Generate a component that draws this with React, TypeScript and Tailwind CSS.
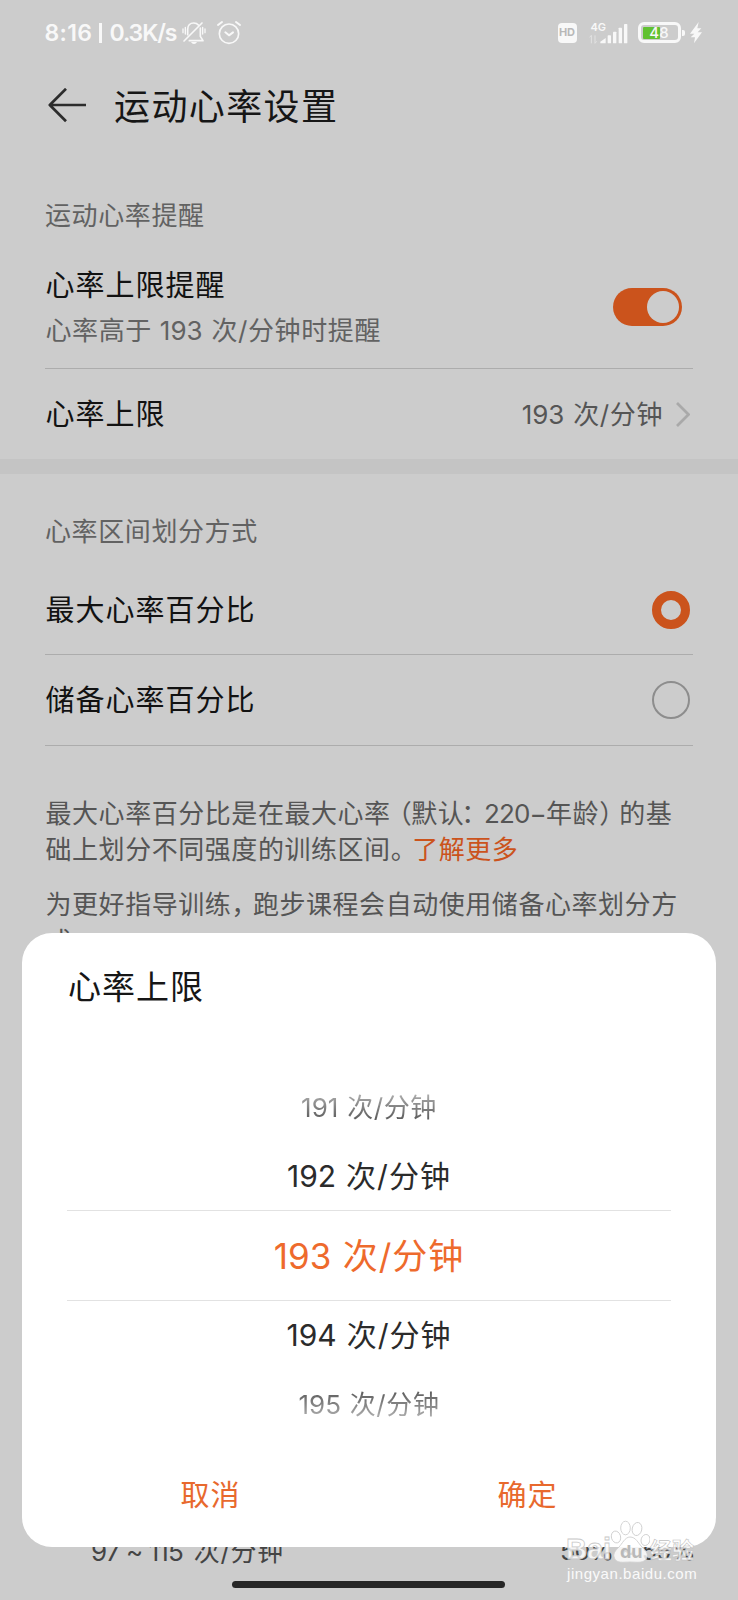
import { ReactNode } from 'react'
import clsx from 'clsx'

interface PickerOption {
    value: number
    className: string
}

const pickerOptions: PickerOption[] = [
    {
        value: 191,
        className:
            'h-[60px] bg-linear-to-b from-[#b4b4b4] from-25% to-[#4c4c4c] to-80% bg-clip-text text-[26px] tracking-[0.6px] text-transparent',
    },
    {
        value: 192,
        className: 'h-[73px] pt-[6px] text-[30px] tracking-[1px] text-[#2b2b2b]',
    },
    {
        value: 193,
        className:
            'h-[91px] border-y border-[#e2e2e2] pt-[1px] text-[35px] tracking-[1px] text-[#ee6a2c]',
    },
    {
        value: 194,
        className: 'h-[73px] pb-[4px] text-[30px] tracking-[1px] text-[#2b2b2b]',
    },
    {
        value: 195,
        className:
            'h-[60px] bg-linear-to-b from-[#4c4c4c] from-20% to-[#b4b4b4] to-75% bg-clip-text text-[26px] tracking-[0.6px] text-transparent',
    },
]

const Rate = ({ value }: { value: number | string }) => (
    <span className="whitespace-pre">
        <span className="mr-[1.5px] tracking-[0]">{value} </span>
        次/分钟
    </span>
)

const MutedBellIcon = () => (
    <svg
        className="h-[26px] w-[28px]"
        viewBox="540 60 84 78"
        fill="none"
        stroke="#f8f8f8"
        strokeWidth="5"
        strokeLinecap="round"
        strokeLinejoin="round"
    >
        <path d="M563 104V88c0-12 8-19 18-19 6 0 11 2 14 6" />
        <path d="M601 84v25l8 13H568" />
        <path d="M606 69 552 123" />
        <path d="M549 87v11M556 82v20M608 82v20M615 87v11" strokeWidth="4" />
        <path d="M573 126h18c-2 4-5 6-9 6s-7-2-9-6z" fill="#f8f8f8" stroke="none" />
    </svg>
)

const AlarmIcon = () => (
    <svg
        className="h-[26px] w-[26px]"
        viewBox="647 60 78 78"
        fill="none"
        stroke="#f8f8f8"
        strokeWidth="5"
        strokeLinecap="round"
        strokeLinejoin="round"
    >
        <circle cx="686" cy="101" r="29" />
        <path d="m675 97 11 9 12-9" strokeWidth="6" />
        <path d="m653 75 12-9M719 75l-12-9" strokeWidth="6" />
    </svg>
)

const SignalIcon = () => (
    <svg className="h-[24px] w-[41px]" viewBox="657 60 123 72" fill="#f8f8f8">
        <path d="M694 127v-5l16-11v16z" />
        <rect x="716" y="103" width="10" height="24" rx="2" />
        <rect x="732" y="92" width="10" height="35" rx="2" />
        <rect x="749" y="80" width="10" height="47" rx="2" />
        <rect x="765" y="69" width="10" height="58" rx="2" />
        <path
            d="M667 127v-24l-5 6M678 103v24l5-6"
            fill="none"
            stroke="#e2e2e2"
            strokeWidth="3"
        />
    </svg>
)

const BoltIcon = () => (
    <svg className="h-[22px] w-[12px]" viewBox="964 66 36 66" fill="#f8f8f8">
        <path d="m990 66-26 35h13l-11 11h13l-3 18 24-33h-13l11-12h-12z" />
    </svg>
)

const StatusBar = () => (
    <div className="flex h-[65px] items-center pl-[44.5px] font-semibold text-[#f8f8f8]">
        <div className="flex w-[135px] items-center pt-[1px] text-[23px]">
            <span className="w-[54px] tracking-[0.3px]">8:16</span>
            <span className="h-[20px] w-[3px] bg-[#f8f8f8]" />
            <span className="ml-[8px] tracking-[-1.1px]">0.3K/s</span>
        </div>
        <MutedBellIcon />
        <span className="w-[8px]" />
        <AlarmIcon />
        <span className="ml-[316px] flex h-[20px] w-[19px] items-center justify-center rounded-[4px] bg-[#f8f8f8] text-[11px] font-bold text-[#b8b8b8]">
            HD
        </span>
        <div className="relative ml-[11px] h-[24px]">
            <SignalIcon />
            <span className="absolute top-[1px] left-[3px] text-[11px] leading-[10px]">
                4G
            </span>
        </div>
        <div className="ml-[9px] flex items-center">
            <div className="relative flex h-[21px] w-[43px] items-center justify-center rounded-[6px] border-3 border-[#f8f8f8]">
                <span className="absolute top-[1.5px] left-[2px] h-[12px] w-[17px] rounded-[1px] bg-[#61c131]" />
                <span className="relative text-[15px] leading-none font-medium">48</span>
            </div>
            <span className="ml-[1px] h-[6px] w-[3px] rounded-r-[2px] bg-[#f8f8f8]" />
        </div>
        <span className="w-[5px]" />
        <BoltIcon />
    </div>
)

const Header = () => (
    <div className="flex h-[82px] items-center pl-[48px]">
        <svg
            className="h-[36px] w-[39px]"
            viewBox="0 0 39 36"
            fill="none"
            stroke="#2c2c2c"
            strokeWidth="2.7"
            strokeLinejoin="round"
        >
            <path d="M18 .8 1.8 17 18 33.2M1.8 17H38" />
        </svg>
        <h1 className="ml-[27px] pt-[1px] text-[36px] tracking-[1.4px] text-[#161616]">
            运动心率设置
        </h1>
    </div>
)

const SectionLabel = ({ children }: { children: ReactNode }) => (
    <div className="px-[45px] pb-[1px] text-[26px] leading-[39px] tracking-[0.6px] text-[#626262]">
        {children}
    </div>
)

const Divider = () => <div className="mx-[45px] h-px bg-[#acacac]" />

const Radio = ({ checked }: { checked: boolean }) => (
    <span
        className={clsx(
            'h-[38px] w-[38px] rounded-full',
            checked ? 'border-[9.5px] border-[#cb531c]' : 'border-2 border-[#8d8d8d]'
        )}
    />
)

const RadioRow = ({
    label,
    checked,
    className,
}: {
    label: string
    checked: boolean
    className: string
}) => (
    <div
        className={clsx(
            'flex items-center justify-between pr-[48.5px] pl-[45.5px] text-[29px] tracking-[1px]',
            className
        )}
    >
        <span className="pt-[2px]">{label}</span>
        <Radio checked={checked} />
    </div>
)

const LimitDialog = () => (
    <div className="absolute top-[933px] left-[22px] h-[614px] w-[694px] rounded-[30px] bg-white px-[45px]">
        <h2 className="pt-[32px] pl-[1px] text-[33px] leading-[44px] tracking-[1px] text-[#161616]">
            心率上限
        </h2>
        <div className="mt-[68px]">
            {pickerOptions.map(({ value, className }) => (
                <div
                    key={value}
                    className={clsx('flex items-center justify-center', className)}
                >
                    <Rate value={value} />
                </div>
            ))}
        </div>
        <div className="mt-[38px] flex h-[48px] items-center text-[29px] tracking-[1px] text-[#e8692d]">
            <button className="ml-[113.5px]">取消</button>
            <button className="ml-[257px]">确定</button>
        </div>
    </div>
)

const Watermark = () => (
    <div className="absolute top-[1518px] left-[566px] w-[140px] text-white/80">
        <div className="flex h-[46px] items-end">
            <span className="w-[44px] font-['Liberation_Sans'] text-[29px] leading-[29px] font-bold [-webkit-text-stroke:0.8px_#c9c9c9]">
                Bai
            </span>
            <div className="relative h-[44px] w-[40px]">
                <svg
                    className="h-[44px] w-[40px]"
                    viewBox="0 0 40 44"
                    fill="#fff"
                    fillOpacity="0.8"
                    stroke="#cfcfcf"
                    strokeWidth="0.9"
                >
                    <ellipse cx="6" cy="17" rx="4.6" ry="6" transform="rotate(-15 6 17)" />
                    <ellipse cx="15.5" cy="8" rx="4.8" ry="6.8" />
                    <ellipse cx="27" cy="9" rx="4.8" ry="6.6" transform="rotate(12 27 9)" />
                    <ellipse cx="35.5" cy="20" rx="4.4" ry="5.6" transform="rotate(15 35.5 20)" />
                    <path d="M20 17c6 0 8 6 12 10s6 6 5 10c-2 7-10 5-17 5s-14 2-16-5c-1-4 2-7 5-10s6-10 11-10z" />
                </svg>
                <span className="absolute top-[22px] left-[10px] text-[18px] leading-[20px] font-bold text-[#b9b9b9]">
                    du
                </span>
            </div>
            <span className="text-[22px] leading-[28px] font-bold [-webkit-text-stroke:0.6px_#c0c0c0]">
                经验
            </span>
        </div>
        <div className="ml-[1px] font-['Liberation_Sans'] text-[15px] leading-[20px] tracking-[0.55px] text-white/90">
            jingyan.baidu.com
        </div>
    </div>
)

const App = () => (
    <div className="relative h-[1600px] w-[738px] overflow-hidden bg-[#ccc] font-[Inter,'Noto_Sans_CJK_SC',sans-serif] whitespace-nowrap text-[#121212]">
        <StatusBar />
        <Header />

        <div className="mt-[49px]">
            <SectionLabel>运动心率提醒</SectionLabel>
        </div>
        <div className="flex h-[132px] items-start justify-between pr-[56px] pl-[45.5px]">
            <div className="pt-[30px] leading-[40px]">
                <div className="text-[29px] tracking-[1px]">心率上限提醒</div>
                <div className="mt-[5px] text-[26px] tracking-[0.6px] text-[#626262]">
                    心率高于 <Rate value={193} />
                    时提醒
                </div>
            </div>
            <div className="mt-[52px] flex h-[38px] w-[69px] items-center justify-end rounded-full bg-[#cb531c] pr-[3px]">
                <span className="h-[32px] w-[32px] rounded-full bg-[#ccc]" />
            </div>
        </div>
        <Divider />
        <div className="flex h-[90px] items-center pr-[48px] pl-[45.5px] text-[29px] tracking-[1px]">
            <span className="pt-[1px]">心率上限</span>
            <span className="ml-auto text-[26px] tracking-[0.6px] text-[#555]">
                <Rate value={193} />
            </span>
            <svg
                className="ml-[13px] h-[25px] w-[14px]"
                viewBox="0 0 14 25"
                fill="none"
                stroke="#a9a9a9"
                strokeWidth="2.8"
            >
                <path d="m1 1 11.5 11.5L1 24" />
            </svg>
        </div>
        <div className="h-[15px] bg-[#c4c4c4]" />

        <div className="mt-[38px]">
            <SectionLabel>心率区间划分方式</SectionLabel>
        </div>
        <RadioRow label="最大心率百分比" checked className="mt-[14px] h-[88px]" />
        <Divider />
        <RadioRow label="储备心率百分比" checked={false} className="h-[90px]" />
        <Divider />

        <div className="mt-[50px] px-[45.5px] text-[26px] leading-[36px] tracking-[0.55px] text-[#555]">
            <p>
                最大心率百分比是在最大心率
                <span className="-ml-[5px]">（</span>
                <span className="-ml-[1px]">默认</span>
                <span className="-ml-[3px] -mr-[4px]">：</span>
                <span className="tracking-[-0.8px]">220−</span>年龄
                <span className="-mr-[6.5px]">）</span>的基
                <br />
                础上划分不同强度的训练区间
                <span className="-mr-[5px]">。</span>
                <span className="text-[#cb531c]">了解更多</span>
            </p>
            <p className="mt-[18.5px]">
                为更好指导训练
                <span className="-mr-[5px]">，</span>
                跑步课程会自动使用储备心率划分方
            </p>
            <p className="mt-[1px]">式</p>
        </div>

        <div className="mt-[572px] flex h-[40px] items-center justify-between pr-[43px] pl-[91px] text-[26px] tracking-[0.6px] text-[#444]">
            <span>
                <span className="mr-[3px] tracking-[-0.9px]">97 ~ 115</span>{' '}
                次/分钟
            </span>
            <span className="text-[25px] tracking-[-0.7px]">50% ~ 59%</span>
        </div>

        <LimitDialog />
        <Watermark />
        <div className="absolute top-[1581px] left-[232px] h-[7px] w-[273px] rounded-full bg-[#262626]" />
    </div>
)

export default App
